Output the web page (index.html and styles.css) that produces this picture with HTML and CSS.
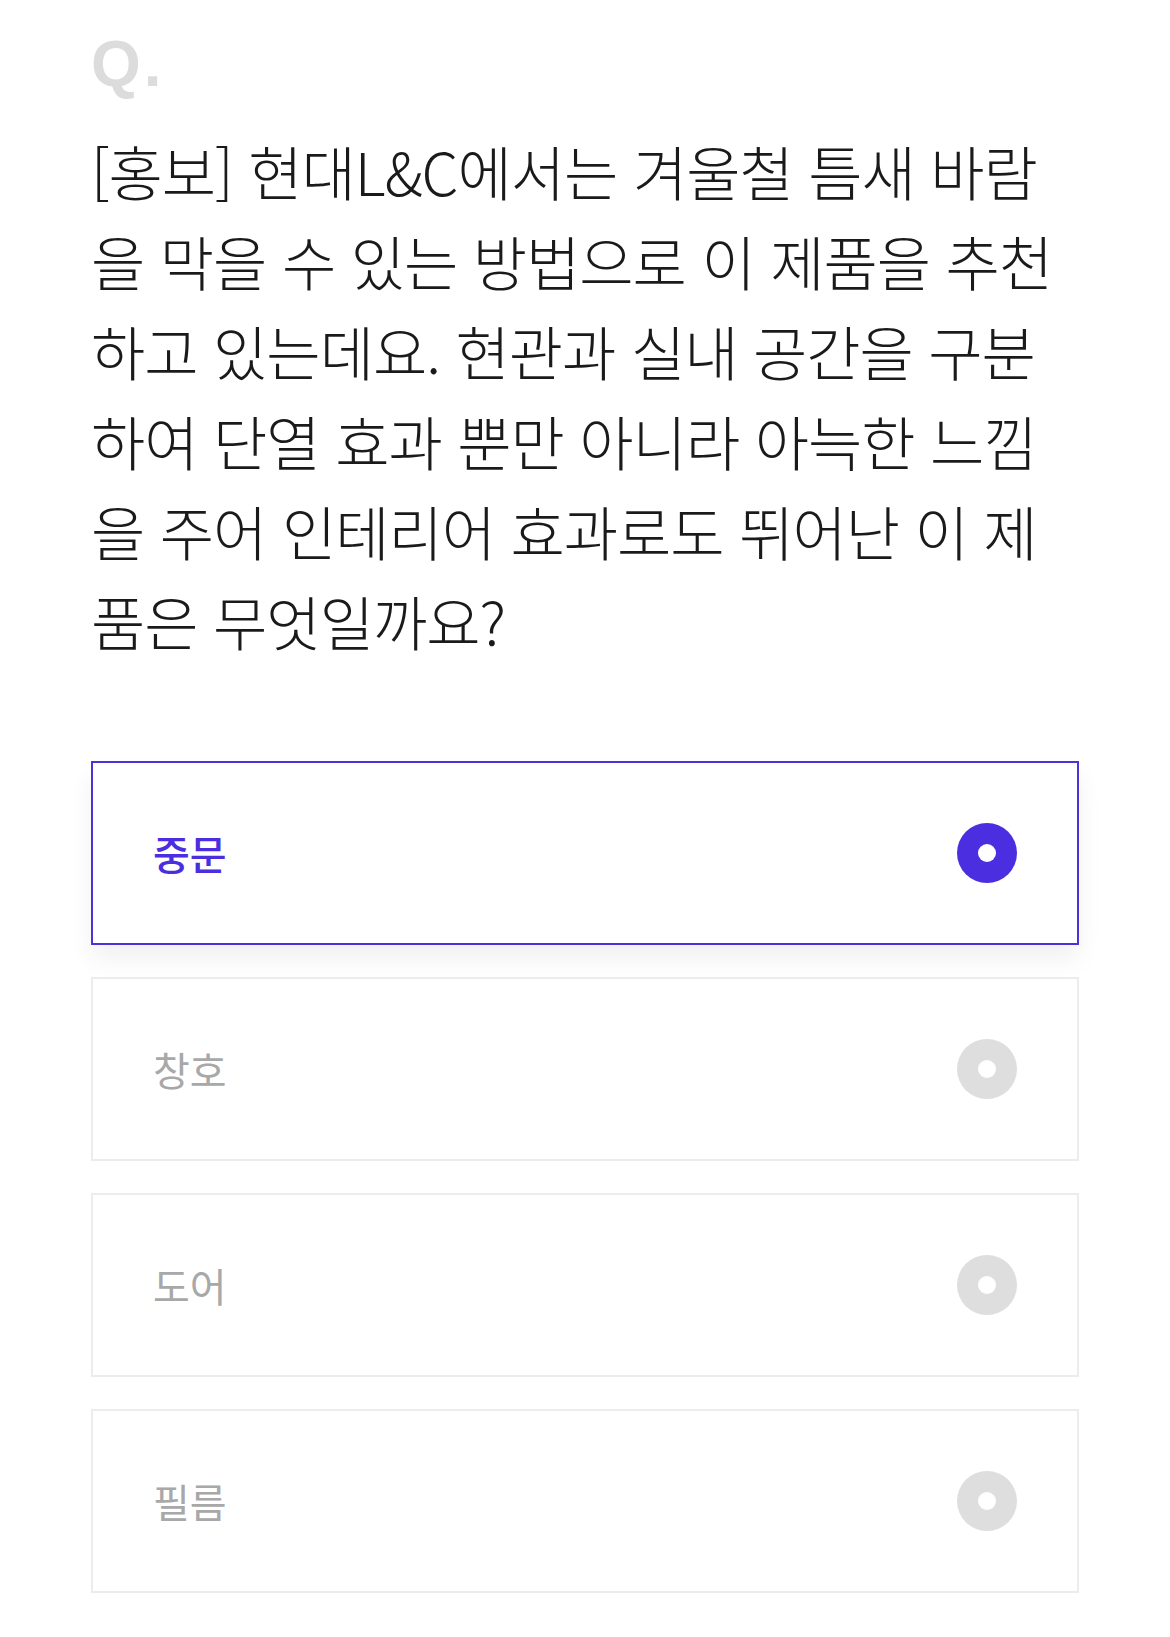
FILE: index.html
```html
<!DOCTYPE html>
<html lang="ko">
<head>
    <meta charset="UTF-8">
    <meta name="viewport" content="width=device-width, initial-scale=1.0">
    <title>퀴즈</title>
    <link rel="stylesheet" href="styles.css">
</head>
<body>
    <div class="quiz">
        <div class="q-mark">Q<span class="q-dot">.</span></div>
        <p class="question">
            [홍보] 현대L&amp;C에서는 겨울철 틈새 바람<br>
            을 막을 수 있는 방법으로 이 제품을 추천<br>
            하고 있는데요. 현관과 실내 공간을 구분<br>
            하여 단열 효과 뿐만 아니라 아늑한 느낌<br>
            을 주어 인테리어 효과로도 뛰어난 이 제<br>
            품은 무엇일까요?
        </p>

        <div class="options">
            <label class="option selected">
                <span class="option-text">중문</span>
                <span class="radio"></span>
            </label>
            <label class="option">
                <span class="option-text">창호</span>
                <span class="radio"></span>
            </label>
            <label class="option">
                <span class="option-text">도어</span>
                <span class="radio"></span>
            </label>
            <label class="option">
                <span class="option-text">필름</span>
                <span class="radio"></span>
            </label>
        </div>
    </div>
</body>
</html>
```

FILE: styles.css
```css
body {
    margin: 0;
    background-color: #fff;
    color: #222;
    font-family: "Noto Sans CJK KR", "Noto Sans", sans-serif;
}
.quiz {
    padding: 31px 91px 40px;
}
.q-mark {
    font-family: "Liberation Sans", Arial, sans-serif;
    font-weight: bold;
    font-size: 64px;
    line-height: 66px;
    color: #dcdcdc;
}
.q-dot {
    margin-left: 3px;
}
.question {
    margin: 29px 0 0;
    font-size: 59px;
    line-height: 90px;
    font-weight: 300;
    letter-spacing: -1px;
    color: #1a1a1a;
    white-space: nowrap;
}
.options {
    display: flex;
    flex-direction: column;
    gap: 32px;
    margin-top: 95px;
}
.option {
    display: flex;
    align-items: center;
    justify-content: space-between;
    height: 184px;
    box-sizing: border-box;
    padding: 0 60px;
    border: 2px solid #ececec;
    background-color: #fff;
    cursor: pointer;
}
.option-text {
    font-size: 40px;
    color: #a8a8a8;
    font-weight: 400;
}
.radio {
    width: 60px;
    height: 60px;
    border-radius: 50%;
    background-color: #dedede;
    position: relative;
}
.radio::after {
    content: "";
    position: absolute;
    top: 21px;
    left: 21px;
    width: 18px;
    height: 18px;
    border-radius: 50%;
    background-color: #fff;
}
.option.selected {
    border-color: #4a34d6;
    box-shadow: 0 14px 24px rgba(0, 0, 0, 0.06);
}
.option.selected .option-text {
    color: #4a2ee0;
    font-weight: 500;
}
.option.selected .radio {
    background-color: #4a2ee0;
}
```
